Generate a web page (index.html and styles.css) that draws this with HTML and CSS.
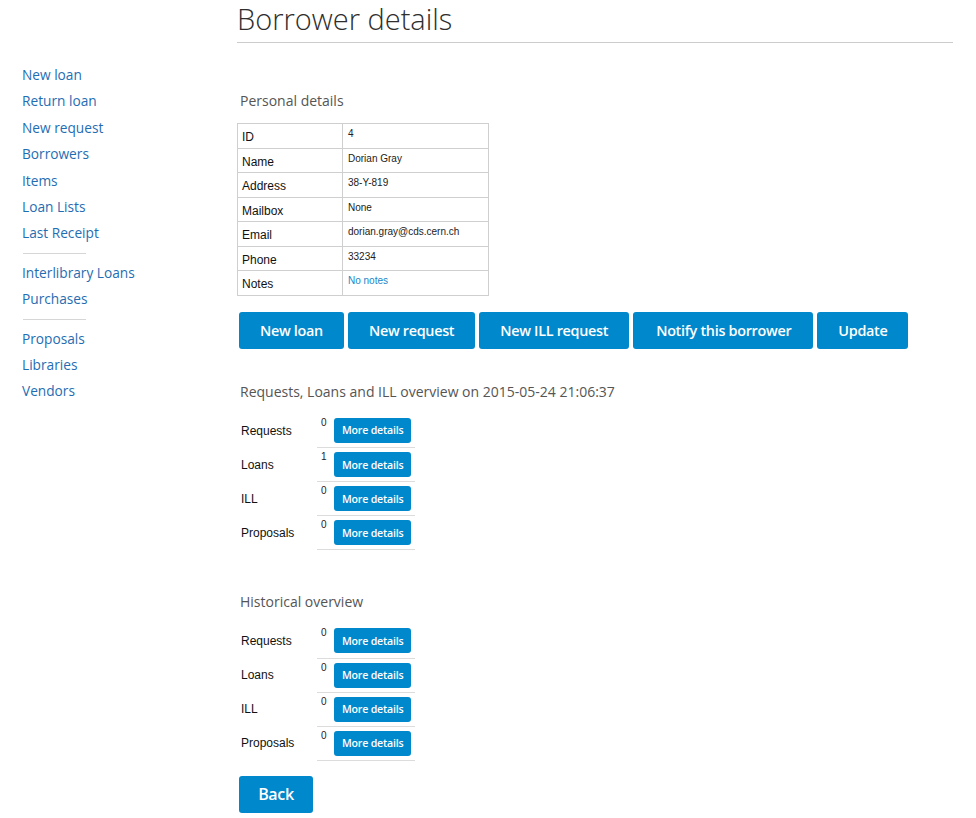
FILE: index.html
```html
<!DOCTYPE html>
<html>
<head>
<meta charset="utf-8">
<link rel="stylesheet" href="styles.css">
</head>
<body>
<div class="page">
  <nav class="sidebar">
    <ul class="navgroup">
      <li><a href="#">New loan</a></li>
      <li><a href="#">Return loan</a></li>
      <li><a href="#">New request</a></li>
      <li><a href="#">Borrowers</a></li>
      <li><a href="#">Items</a></li>
      <li><a href="#">Loan Lists</a></li>
      <li><a href="#">Last Receipt</a></li>
    </ul>
    <hr class="navsep">
    <ul class="navgroup">
      <li><a href="#">Interlibrary Loans</a></li>
      <li><a href="#">Purchases</a></li>
    </ul>
    <hr class="navsep">
    <ul class="navgroup">
      <li><a href="#">Proposals</a></li>
      <li><a href="#">Libraries</a></li>
      <li><a href="#">Vendors</a></li>
    </ul>
  </nav>
  <main class="main">
    <h1 class="title">Borrower details</h1>

    <h2 class="section">Personal details</h2>
    <table class="details">
      <tr><th>ID</th><td>4</td></tr>
      <tr><th>Name</th><td>Dorian Gray</td></tr>
      <tr><th>Address</th><td>38-Y-819</td></tr>
      <tr><th>Mailbox</th><td>None</td></tr>
      <tr><th>Email</th><td>dorian.gray@cds.cern.ch</td></tr>
      <tr><th>Phone</th><td>33234</td></tr>
      <tr><th>Notes</th><td><a href="#" class="notes">No notes</a></td></tr>
    </table>

    <div class="actions">
      <button class="btn btn-lg">New loan</button>
      <button class="btn btn-lg">New request</button>
      <button class="btn btn-lg">New ILL request</button>
      <button class="btn btn-lg btn-wide">Notify this borrower</button>
      <button class="btn btn-lg">Update</button>
    </div>

    <h2 class="section section-ov">Requests, Loans and ILL overview on 2015-05-24 21:06:37</h2>
    <table class="overview">
      <tr><th>Requests</th><td class="count">0</td><td class="act"><button class="btn btn-sm">More details</button></td></tr>
      <tr><th>Loans</th><td class="count">1</td><td class="act"><button class="btn btn-sm">More details</button></td></tr>
      <tr><th>ILL</th><td class="count">0</td><td class="act"><button class="btn btn-sm">More details</button></td></tr>
      <tr><th>Proposals</th><td class="count">0</td><td class="act"><button class="btn btn-sm">More details</button></td></tr>
    </table>

    <h2 class="section section-hist">Historical overview</h2>
    <table class="overview">
      <tr><th>Requests</th><td class="count">0</td><td class="act"><button class="btn btn-sm">More details</button></td></tr>
      <tr><th>Loans</th><td class="count">0</td><td class="act"><button class="btn btn-sm">More details</button></td></tr>
      <tr><th>ILL</th><td class="count">0</td><td class="act"><button class="btn btn-sm">More details</button></td></tr>
      <tr><th>Proposals</th><td class="count">0</td><td class="act"><button class="btn btn-sm">More details</button></td></tr>
    </table>

    <div class="back">
      <button class="btn btn-lg btn-back">Back</button>
    </div>
  </main>
</div>
</body>
</html>
```

FILE: styles.css
```css
* { box-sizing: border-box; }
html, body { margin: 0; padding: 0; background: #fff; }
body { font-family: "Open Sans", "Liberation Sans", sans-serif; color: #333; }

.page { display: flex; align-items: flex-start; }

.sidebar { width: 237px; padding: 63px 0 0 22px; flex: none; }
.navgroup { list-style: none; margin: 0; padding: 0; }
.navgroup li { height: 26.4px; line-height: 24px; font-size: 13.7px; }
.navgroup a { color: #1f6db3; text-decoration: none; }
.navsep { width: 63px; margin: 5px 0 7px 1px; border: 0; border-top: 1px solid #d6d6d6; height: 0; }

.main { width: 716px; flex: none; }
.title {
  margin: 0; font-weight: 300; font-size: 29px; line-height: 37px;
  color: #2e2e2e; padding-bottom: 5px; border-bottom: 1px solid #cccccc;
}

.section { font-weight: 400; font-size: 14px; color: #555; margin: 0; padding-left: 3px; line-height: 20px; }
.section { margin-top: 48px; margin-bottom: 12px; }
.section-ov { margin-top: 33px; margin-bottom: 12px; }
.section-hist { margin-top: 42px; margin-bottom: 12px; }

.details { border-collapse: collapse; margin-left: 0; font-family: "Liberation Sans", Arial, sans-serif; }
.details th, .details td { border: 1px solid #cfcfcf; height: 24.5px; vertical-align: top; }
.details th { width: 105px; text-align: left; font-weight: 400; font-size: 12px; color: #111; padding: 6px 4px 0 4px; }
.details td { width: 146px; font-size: 10px; color: #222; padding: 4px 4px 0 5px; }
.details .notes { color: #1a85c8; text-decoration: none; }

.actions { margin-top: 16px; display: flex; gap: 4px; padding-left: 2px; }

.btn {
  background: #0088cc; color: #fff; border: 0; border-radius: 3px;
  font-family: "Open Sans", sans-serif; font-weight: 600; cursor: pointer;
}
.btn-lg { height: 37px; font-size: 14.4px; padding: 0 21px; letter-spacing: -0.3px; }
.actions .btn-wide { padding: 0 22px 0 23px; }
.btn-sm { height: 25px; font-size: 10.6px; padding: 0 8px; letter-spacing: -0.2px; }

.overview { border-collapse: collapse; font-family: "Liberation Sans", Arial, sans-serif; }
.overview th { text-align: left; font-weight: 400; font-size: 12px; color: #111; width: 80px; padding: 0 0 0 4px; vertical-align: middle; height: 34px; }
.overview td { border-bottom: 1px solid #dcdcdc; height: 34px; }
.overview td.count { font-size: 10px; color: #222; vertical-align: top; padding: 3px 7px 0 4px; width: 17px; }
.overview td.act { vertical-align: middle; padding: 0 4px 0 0; }
.overview tr:first-child td { height: 33px; }

.back { margin-top: 15px; padding-left: 2px; }
.btn-back { width: 74px; padding: 0; font-size: 16px; }
```
